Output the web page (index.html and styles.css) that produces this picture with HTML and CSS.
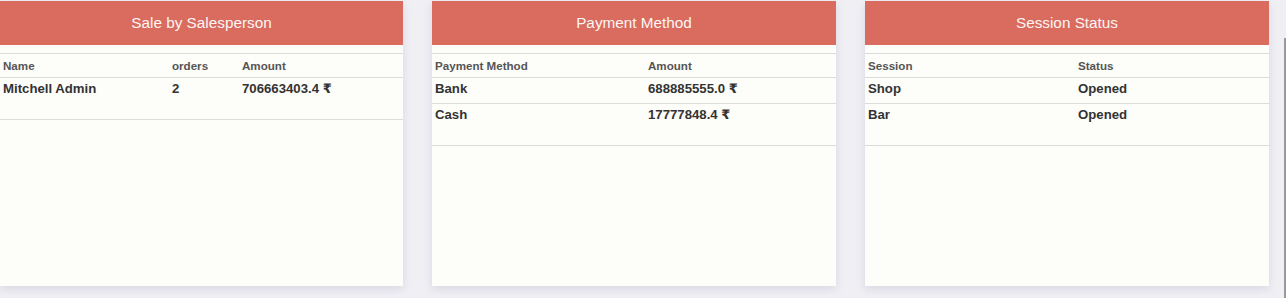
FILE: index.html
```html
<!DOCTYPE html>
<html>
<head>
<meta charset="utf-8">
<link rel="stylesheet" href="styles.css">
</head>
<body>
<div class="board">
  <section class="card">
    <header class="card-title">Sale by Salesperson</header>
    <table class="tbl tbl-sales">
      <thead><tr><th class="c1">Name</th><th class="c2">orders</th><th>Amount</th></tr></thead>
      <tbody>
        <tr class="last"><td>Mitchell Admin</td><td>2</td><td>706663403.4 <span class="cur">₹</span></td></tr>
      </tbody>
    </table>
  </section>
  <section class="card">
    <header class="card-title">Payment Method</header>
    <table class="tbl tbl-pay">
      <thead><tr><th class="c1">Payment Method</th><th>Amount</th></tr></thead>
      <tbody>
        <tr><td>Bank</td><td>688885555.0 <span class="cur">₹</span></td></tr>
        <tr class="last"><td>Cash</td><td>17777848.4 <span class="cur">₹</span></td></tr>
      </tbody>
    </table>
  </section>
  <section class="card">
    <header class="card-title">Session Status</header>
    <table class="tbl tbl-sess">
      <thead><tr><th class="c1">Session</th><th>Status</th></tr></thead>
      <tbody>
        <tr><td>Shop</td><td>Opened</td></tr>
        <tr class="last"><td>Bar</td><td>Opened</td></tr>
      </tbody>
    </table>
  </section>
</div>
<div class="scroll-thumb"></div>
</body>
</html>
```
FILE: styles.css
```css
html, body {
  margin: 0;
  padding: 0;
  background: #efeff4;
  font-family: "Liberation Sans", Arial, sans-serif;
  height: 298px;
  overflow: hidden;
}
.board {
  display: flex;
  gap: 29px;
  padding-top: 1px;
}
.card {
  width: 403px;
  height: 285px;
  background: #fdfdf9;
  box-shadow: 0 3px 8px rgba(150, 150, 175, 0.25);
}
.card + .card {
  width: 404px;
}
.card-title {
  height: 44px;
  background: #d96b5f;
  color: #fdf6f4;
  font-size: 15.3px;
  line-height: 44px;
  text-align: center;
  margin-bottom: 8px;
}
.tbl {
  width: 100%;
  border-collapse: collapse;
  border-top: 1px solid #dcdcdc;
}
.tbl th {
  font-size: 11.6px;
  font-weight: bold;
  color: #555;
  text-align: left;
  height: 23px;
  padding: 0 3px;
  vertical-align: middle;
  border-bottom: 1px solid #dcdcdc;
}
.tbl td {
  font-size: 13.2px;
  font-weight: bold;
  color: #333;
  text-align: left;
  vertical-align: top;
  padding: 3px 3px 0;
  line-height: 16px;
  height: 22px;
  border-bottom: 1px solid #dcdcdc;
}
.tbl .cur {
  font-family: "DejaVu Sans", sans-serif;
  font-size: 13px;
}
.tbl tr.last td {
  height: 38px;
}
.tbl-sales .c1 { width: 163px; }
.tbl-sales .c2 { width: 64px; }
.tbl-pay .c1 { width: 207px; }
.tbl-sess .c1 { width: 204px; }
.scroll-thumb {
  position: fixed;
  right: 0;
  top: 38px;
  width: 2px;
  height: 260px;
  background: #9a9a9a;
}
```
